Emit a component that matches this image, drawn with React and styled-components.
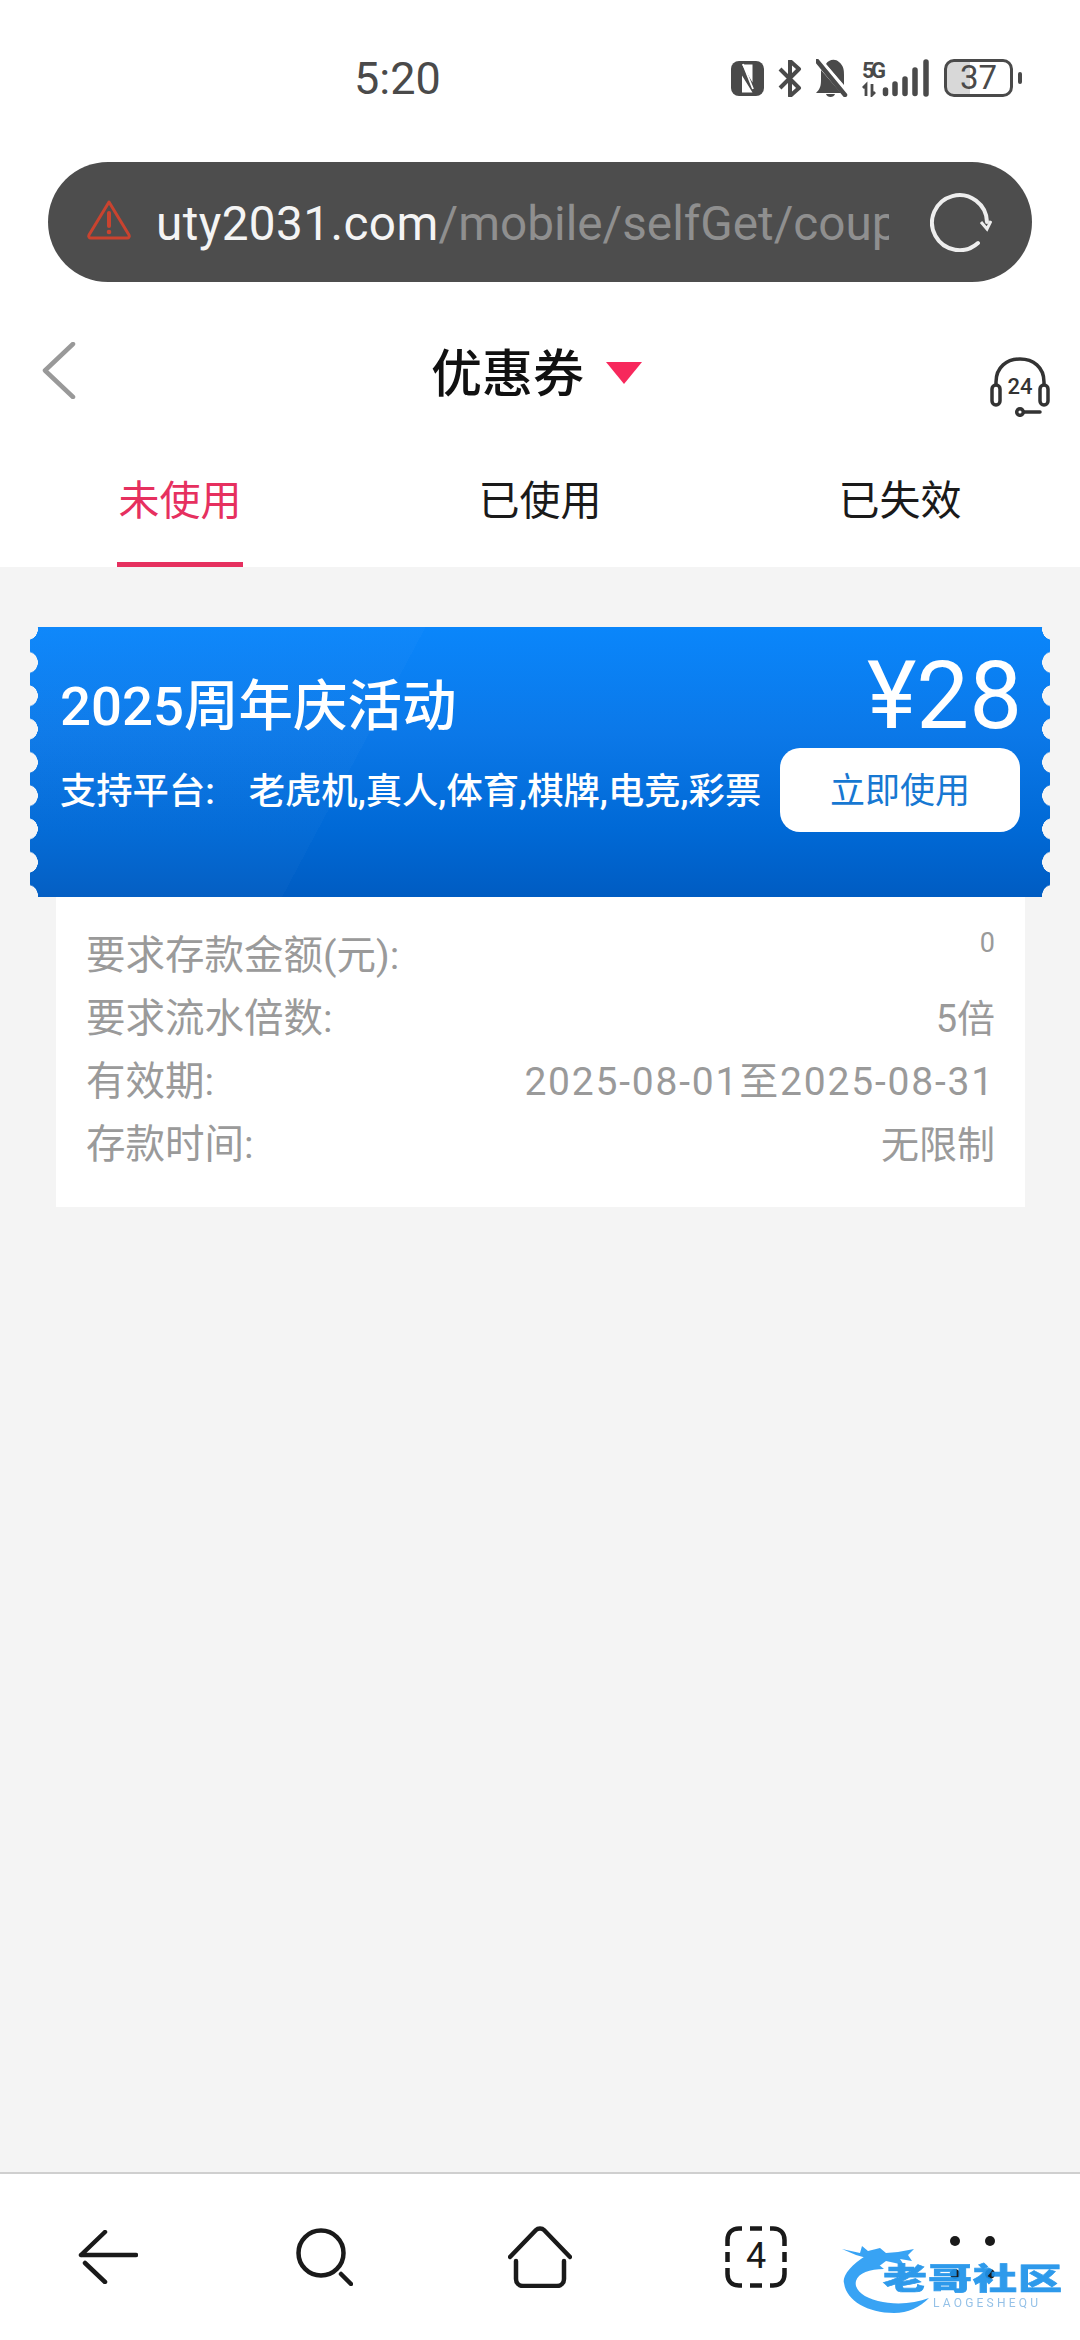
import React from 'react';
import styled, { createGlobalStyle } from 'styled-components';

const GlobalStyle = createGlobalStyle`
  * { box-sizing: border-box; }
  html, body { margin: 0; padding: 0; background: #fff; }
  body { font-family: Roboto, "Noto Sans CJK SC", sans-serif; }
`;

const Page = styled.div`
  position: relative;
  width: 1080px;
  height: 2340px;
  display: flex;
  flex-direction: column;
  overflow: hidden;
  background: #fff;
`;

const StatusBar = styled.div`
  height: 162px;
  flex: none;
  padding: 56px 59px 0 354px;
  display: flex;
  justify-content: space-between;
  align-items: flex-start;
  color: #4a4a4a;
`;

const Clock = styled.span`
  font-size: 45px;
  line-height: 46px;
`;

const StatusIcons = styled.div`
  display: flex;
  align-items: center;
  gap: 14px;
  height: 40px;
  margin-top: 2px;
`;

const Battery = styled.div`
  position: relative;
  width: 69px;
  height: 38px;
  margin-right: 8px;
  border: 3px solid #4a4a4a;
  border-radius: 10px;
  background: linear-gradient(90deg, #d8d8d8 37%, #fff 37%);
  font-size: 33px;
  line-height: 32px;
  text-align: center;

  &::after {
    content: '';
    position: absolute;
    right: -12px;
    top: 10px;
    width: 4px;
    height: 12px;
    border-radius: 2px;
    background: #4a4a4a;
  }
`;

const UrlBar = styled.div`
  height: 120px;
  flex: none;
  margin: 0 48px;
  padding: 0 40px 0 38px;
  display: flex;
  align-items: center;
  border-radius: 60px;
  background: #4d4d4d;
`;

const UrlText = styled.div`
  width: 733px;
  margin: 4px 41px 0 24px;
  overflow: hidden;
  white-space: nowrap;
  font-size: 47.700px;
  line-height: 62px;
  color: #8f8f8f;
`;

const UrlHost = styled.span`
  color: #f4f4f4;
  letter-spacing: 0.400px;
`;

const WarningSlot = styled.div`
  display: flex;
  margin-top: -4px;
`;

const Header = styled.div`
  height: 160px;
  flex: none;
  padding: 16px 30px 0 40px;
  display: grid;
  grid-template-columns: 391px 212px 1fr;
  align-items: center;
`;

const HeaderTitle = styled.div`
  display: flex;
  align-items: center;
  gap: 22px;
  font-size: 51px;
  font-weight: 500;
  color: #111;
`;

const Caret = styled.span`
  width: 36px;
  height: 22px;
  margin-top: 6px;
  background: #f7285c;
  clip-path: polygon(0 0, 100% 0, 50% 100%);
`;

const SupportSlot = styled.div`
  justify-self: end;
  height: 60px;
  margin-top: 34px;
`;

const Tabs = styled.div`
  height: 125px;
  flex: none;
  display: grid;
  grid-template-columns: repeat(3, 1fr);
`;

const Tab = styled.div`
  justify-self: center;
  width: 126px;
  height: 125px;
  line-height: 118px;
  text-align: center;
  font-size: 41px;
  color: ${({ $active }) => ($active ? '#e6305f' : '#1a1a1a')};
  border-bottom: 5px solid ${({ $active }) => ($active ? '#e6305f' : 'transparent')};
`;

const Content = styled.main`
  flex: 1;
  padding: 60px 30px 0;
  background: #f4f4f4;
`;

const Coupon = styled.section`
  position: relative;
  height: 270px;
  padding: 16px 30px 0;
  color: #fff;
  background:
    linear-gradient(118deg, rgba(255, 255, 255, 0.018) 34%, rgba(255, 255, 255, 0) 34%),
    linear-gradient(180deg, #0a86fb 0%, #0b78e8 40%, #0069d6 75%, #005cc2 100%);

  /* perforated ticket edges */
  &::before,
  &::after {
    content: '';
    position: absolute;
    top: 0;
    bottom: 0;
    width: 8px;
    background-size: 8px 33.300px;
    background-repeat: repeat-y;
    background-position: 0 -14.500px;
  }
  &::before {
    left: 0;
    background-image: radial-gradient(circle 11px at -3px 50%, #f4f4f4 97%, rgba(244, 244, 244, 0) 100%);
  }
  &::after {
    right: 0;
    background-image: radial-gradient(circle 11px at 11px 50%, #f4f4f4 97%, rgba(244, 244, 244, 0) 100%);
  }
`;

const CouponTop = styled.div`
  height: 105px;
  display: flex;
  justify-content: space-between;
  align-items: flex-start;
`;

const CouponTitle = styled.h2`
  margin: 26px 0 0;
  font-size: 54.500px;
  line-height: 74px;
  font-weight: 500;
`;

const Price = styled.div`
  margin: 3px -2px 0 0;
  font-size: 94px;
  line-height: 100px;
  font-weight: 400;
`;

const CouponBottom = styled.div`
  display: flex;
  justify-content: space-between;
  align-items: center;
`;

const Platforms = styled.div`
  display: flex;
  gap: 34px;
  margin-bottom: 5px;
  font-size: 36.300px;
  font-weight: 500;
  white-space: nowrap;
`;

const UseButton = styled.button`
  width: 240px;
  height: 84px;
  padding: 0 0 6px;
  border: 0;
  border-radius: 20px;
  background: #fff;
  color: #1778d2;
  font: 400 35px Roboto, "Noto Sans CJK SC", sans-serif;
`;

const Details = styled.div`
  margin: 0 25px 0 26px;
  height: 310px;
  padding: 27px 30px 0 30px;
  background: #fff;
`;

const DetailRow = styled.div`
  height: 63px;
  display: flex;
  justify-content: space-between;
  align-items: center;
  font-size: 39.500px;
  line-height: 58px;
  color: #9a9a9a;
`;

const DetailValue = styled.span`
  font-size: ${({ $spaced }) => ($spaced ? '39px' : '38px')};
  letter-spacing: ${({ $spaced }) => ($spaced ? '1.800px' : '0')};
  line-height: 58px;
`;

const DepositValue = styled.span`
  align-self: flex-start;
  font-size: 27px;
  line-height: 38px;
`;

const Footer = styled.nav`
  height: 168px;
  flex: none;
  display: grid;
  grid-template-columns: repeat(5, 1fr);
  align-items: center;
  justify-items: center;
  border-top: 2px solid #cfcfcf;
  background: #fff;
`;

const TabCount = styled.div`
  position: relative;
  width: 62px;
  height: 62px;
  font-size: 36px;
  line-height: 60px;
  text-align: center;
  color: #1a1a1a;

  svg {
    position: absolute;
    inset: 0;
  }
`;

const MenuDots = styled.div`
  display: grid;
  grid-template-columns: 10px 10px;
  gap: 23px 25px;
`;

const Dot = styled.span`
  width: 10px;
  height: 10px;
  border-radius: 50%;
  background: #1a1a1a;
`;

/* site stamp laid over the bottom right corner */
const Stamp = styled.div`
  position: absolute;
  left: 842px;
  top: 2245px;
  width: 222px;
  height: 68px;
  opacity: 0.93;
  filter: blur(0.5px);

  svg {
    position: absolute;
    left: 0;
    top: 0;
  }
`;

const StampName = styled.div`
  position: absolute;
  left: 41px;
  top: 16px;
  width: 181px;
  height: 36px;
  font-family: "Noto Sans CJK SC", sans-serif;
  font-weight: 900;
  font-size: 44px;
  line-height: 44px;
  letter-spacing: 1px;
  white-space: nowrap;
  color: #1f93ea;
  transform: scaleY(0.68);
  transform-origin: left top;
  -webkit-text-stroke: 1px #1f93ea;
`;

const StampLatin = styled.div`
  position: absolute;
  left: 91px;
  top: 52px;
  font-size: 12px;
  line-height: 12px;
  letter-spacing: 3.200px;
  white-space: nowrap;
  color: #8dbde6;
`;

const NfcIcon = () => (
  <svg width="33" height="35" viewBox="0 0 33 35">
    <rect x="0" y="0" width="33" height="35" rx="8" fill="#4a4a4a" />
    <path d="M11 3.500h10.500v18zM11 14.500l10.500 17H11z" fill="#fff" />
    <path d="M12 3l10 25" stroke="#fff" strokeWidth="1.800" />
  </svg>
);

const BluetoothIcon = () => (
  <svg width="24" height="37" viewBox="0 0 24 37">
    <path d="M2 9l19 19-9 8V1l9 8L2 28" fill="none" stroke="#4a4a4a" strokeWidth="4" strokeLinejoin="round" />
  </svg>
);

const MutedBell = () => (
  <svg width="32" height="38" viewBox="0 0 32 38">
    <path d="M10 5c2-4 9-6 13-2 5 4 5 9 5 13v10z" fill="#4a4a4a" />
    <path d="M5 11l20 23H0c4-4 5-7 5-13z" fill="#4a4a4a" />
    <path d="M10 35h9c-1 4-8 4-9 0z" fill="#4a4a4a" />
    <path d="M2 -2l29 35" stroke="#fff" strokeWidth="3" />
    <path d="M1 2l28 34" stroke="#4a4a4a" strokeWidth="4.500" strokeLinecap="round" />
  </svg>
);

const SignalIcon = () => (
  <svg width="68" height="38" viewBox="0 0 68 38">
    <text x="0" y="19" fontFamily="Roboto, sans-serif" fontWeight="700" fontSize="22" fill="#4a4a4a" textLength="24">5G</text>
    <path d="M4 37V26l-3 3M10 25v11l3-3" fill="none" stroke="#4a4a4a" strokeWidth="2.800" />
    <g stroke="#4a4a4a" strokeWidth="5.500" strokeLinecap="round">
      <path d="M23.500 31v3.500M33 25v9.500M43 20v14.500M53 11v23.500M64 3v32" />
    </g>
  </svg>
);

const WarningIcon = () => (
  <svg width="46" height="42" viewBox="0 0 46 42">
    <path d="M23 3L43 36a2 2 0 0 1-2 3H5a2 2 0 0 1-2-3z" fill="none" stroke="#c9432f" strokeWidth="3" strokeLinejoin="round" />
    <path d="M23 14v13" stroke="#c9432f" strokeWidth="4" strokeLinecap="round" />
    <circle cx="23" cy="33" r="2.300" fill="#c9432f" />
  </svg>
);

const ReloadIcon = () => (
  <svg width="62" height="60" viewBox="0 0 62 60">
    <path d="M57 30A27.500 27.500 0 1 0 48 51" fill="none" stroke="#eeeeee" strokeWidth="4" strokeLinecap="round" />
    <path d="M51 30l6 7 4-8" fill="none" stroke="#eeeeee" strokeWidth="3" />
  </svg>
);

const BackChevron = () => (
  <svg width="36" height="57" viewBox="0 0 36 57">
    <path d="M33 2L5 28.500 33 55" fill="none" stroke="#999" strokeWidth="4.500" strokeLinecap="round" strokeLinejoin="round" />
  </svg>
);

const SupportIcon = () => (
  <svg width="60" height="60" viewBox="0 0 60 60" fill="none" stroke="#333" strokeWidth="3.500">
    <path d="M6 28V25C6 10 17 2 30 2s24 8 24 23v3" />
    <rect x="2" y="28" width="8" height="20" rx="4" />
    <rect x="50" y="28" width="8" height="20" rx="4" />
    <circle cx="30" cy="55" r="3.300" />
    <path d="M34 55H50" strokeLinecap="round" />
    <text x="30" y="37" textAnchor="middle" fontFamily="Roboto, sans-serif" fontSize="22" fontWeight="500" fill="#333" stroke="none">24</text>
  </svg>
);

const ArrowBackIcon = () => (
  <svg width="60" height="54" viewBox="0 0 60 54" fill="none" stroke="#1a1a1a" strokeWidth="4.500" strokeLinecap="round">
    <path d="M3 25H58M27 2L3 25M7 33L27 52" />
  </svg>
);

const SearchIcon = () => (
  <svg width="57" height="58" viewBox="0 0 57 58" fill="none" stroke="#1a1a1a" strokeWidth="4.500" strokeLinecap="round">
    <circle cx="25" cy="25" r="22.500" />
    <path d="M45 46l10 10" />
  </svg>
);

const HomeIcon = () => (
  <svg width="64" height="62" viewBox="0 0 64 62" fill="none" stroke="#1a1a1a" strokeWidth="4.500" strokeLinecap="round">
    <path d="M2 31L28 4c2-2 6-2 8 0l26 27" />
    <path d="M8 35V53c0 4 3 7 7 7H49c4 0 7-3 7-7V35" />
  </svg>
);

const TabsFrame = () => (
  <svg width="62" height="62" viewBox="0 0 62 62" fill="none" stroke="#1a1a1a" strokeWidth="4.500">
    <path d="M2.500 20V14C2.500 7 7 2.500 14 2.500H17M45 2.500H48C55 2.500 59.500 7 59.500 14V20M59.500 42V48C59.500 55 55 59.500 48 59.500H45M17 59.500H14C7 59.500 2.500 55 2.500 48V42" />
    <path d="M25 2.500H37M25 59.500H37M2.500 26V36M59.500 26V36" />
  </svg>
);

const Dragon = () => (
  <svg width="92" height="70" viewBox="0 0 92 70" fill="#2a9df4">
    <path d="M25 10C8 20 0 32 2 38c2 17 23 30 50 30 14 0 26-6 35-15-15 6-35 7-51 3C20 52 12 44 14 36c2-8 14-12 28-12z" />
    <path d="M0 4l18 4 2-7 6 5 12-3 6 5 12-1 16-3-6 6 4 6-12-2 4 6-18-4-8 6-8-8-14-4z" />
  </svg>
);

const details = [
  { label: '要求流水倍数:', value: '5倍' },
  { label: '有效期:', value: '2025-08-01至2025-08-31', spaced: true },
  { label: '存款时间:', value: '无限制' },
];

export default function App() {
  return (
    <Page>
      <GlobalStyle />
      <StatusBar>
        <Clock>5:20</Clock>
        <StatusIcons>
          <NfcIcon />
          <BluetoothIcon />
          <MutedBell />
          <SignalIcon />
          <Battery>37</Battery>
        </StatusIcons>
      </StatusBar>

      <UrlBar>
        <WarningSlot>
          <WarningIcon />
        </WarningSlot>
        <UrlText>
          <UrlHost>uty2031.com</UrlHost>/mobile/selfGet/coupon
        </UrlText>
        <ReloadIcon />
      </UrlBar>

      <Header>
        <BackChevron />
        <HeaderTitle>
          优惠券
          <Caret />
        </HeaderTitle>
        <SupportSlot>
          <SupportIcon />
        </SupportSlot>
      </Header>

      <Tabs>
        <Tab $active>未使用</Tab>
        <Tab>已使用</Tab>
        <Tab>已失效</Tab>
      </Tabs>

      <Content>
        <Coupon>
          <CouponTop>
            <CouponTitle>2025周年庆活动</CouponTitle>
            <Price>¥28</Price>
          </CouponTop>
          <CouponBottom>
            <Platforms>
              <span>支持平台:</span>
              <span>老虎机,真人,体育,棋牌,电竞,彩票</span>
            </Platforms>
            <UseButton>立即使用</UseButton>
          </CouponBottom>
        </Coupon>
        <Details>
          <DetailRow>
            <span>要求存款金额(元):</span>
            <DepositValue>0</DepositValue>
          </DetailRow>
          {details.map((row) => (
            <DetailRow key={row.label}>
              <span>{row.label}</span>
              <DetailValue $spaced={row.spaced}>{row.value}</DetailValue>
            </DetailRow>
          ))}
        </Details>
      </Content>

      <Footer>
        <ArrowBackIcon />
        <SearchIcon />
        <HomeIcon />
        <TabCount>
          <TabsFrame />4
        </TabCount>
        <MenuDots>
          <Dot />
          <Dot />
          <Dot />
          <Dot />
        </MenuDots>
      </Footer>

      <Stamp>
        <Dragon />
        <StampName>老哥社区</StampName>
        <StampLatin>LAOGESHEQU</StampLatin>
      </Stamp>
    </Page>
  );
}
